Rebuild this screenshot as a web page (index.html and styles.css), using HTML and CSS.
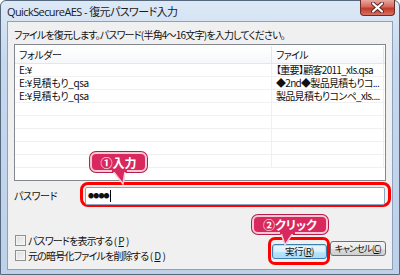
FILE: index.html
```html
<!DOCTYPE html>
<html lang="ja">
<head>
  <meta charset="UTF-8" />
  <title>QuickSecureAES - 復元パスワード入力</title>
  <link rel="stylesheet" href="styles.css">
</head>
<body>
  <div class="window">
    <div class="titlebar">
      <span class="title">QuickSecureAES - 復元パスワード入力</span>
      <div class="close-btn">
        <svg width="13" height="11" viewBox="0 0 13 11">
          <path d="M2 1.5 L11 9.5 M11 1.5 L2 9.5" stroke="#5a2420" stroke-width="4" stroke-linecap="round"/>
          <path d="M2 1.5 L11 9.5 M11 1.5 L2 9.5" stroke="#ffffff" stroke-width="2.2" stroke-linecap="round"/>
        </svg>
      </div>
    </div>

    <div class="client">
      <p class="intro">ファイルを復元します。パスワード(半角4～16文字)を入力してください。</p>

      <div class="list">
        <div class="list-row list-head">
          <span class="col-folder">フォルダー</span>
          <span class="col-file">ファイル</span>
          <span class="col-rest"></span>
        </div>
        <div class="list-row">
          <span class="col-folder">E:¥</span>
          <span class="col-file">【重要】顧客2011_xls.qsa</span>
          <span class="col-rest"></span>
        </div>
        <div class="list-row">
          <span class="col-folder">E:¥見積もり_qsa</span>
          <span class="col-file">◆2nd◆製品見積もりコ...</span>
          <span class="col-rest"></span>
        </div>
        <div class="list-row">
          <span class="col-folder">E:¥見積もり_qsa</span>
          <span class="col-file">製品見積もりコンペ_xls....</span>
          <span class="col-rest"></span>
        </div>
        <div class="list-row"><span class="col-folder"></span><span class="col-file"></span><span class="col-rest"></span></div>
        <div class="list-row"><span class="col-folder"></span><span class="col-file"></span><span class="col-rest"></span></div>
        <div class="list-row"><span class="col-folder"></span><span class="col-file"></span><span class="col-rest"></span></div>
        <div class="list-row"><span class="col-folder"></span><span class="col-file"></span><span class="col-rest"></span></div>
        <div class="list-row"><span class="col-folder"></span><span class="col-file"></span><span class="col-rest"></span></div>
      </div>

      <div class="password-row">
        <label for="password">パスワード</label>
        <div class="highlight highlight-input">
          <div class="textbox" id="password">●●●●<span class="caret"></span></div>
        </div>
      </div>

      <div class="footer">
        <div class="checks">
          <label class="check"><span class="box"></span>パスワードを表示する (<u>P</u>)</label>
          <label class="check"><span class="box"></span>元の暗号化ファイルを削除する (<u>D</u>)</label>
        </div>
        <div class="buttons">
          <div class="highlight highlight-btn">
            <button class="btn btn-default">実行(<u>R</u>)</button>
          </div>
          <button class="btn btn-cancel">キャンセル(<u>C</u>)</button>
        </div>
      </div>

      <div class="callout callout-input">
        ①入力
        <svg class="tail" width="20" height="14" viewBox="0 0 20 14">
          <polygon points="2,0 14,0 12,13" fill="#d8285d" stroke="#f5c9d6" stroke-width="1.5"/>
          <rect x="1" y="-2" width="15" height="3" fill="#d8285d"/>
        </svg>
      </div>
      <div class="callout callout-btn">
        ②クリック
        <svg class="tail" width="20" height="14" viewBox="0 0 20 14">
          <polygon points="4,0 16,0 8,12" fill="#d8285d" stroke="#f5c9d6" stroke-width="1.5"/>
          <rect x="3" y="-2" width="15" height="3" fill="#d8285d"/>
        </svg>
      </div>
    </div>
  </div>
</body>
</html>
```

FILE: styles.css
```css
* {
  box-sizing: border-box;
}

body {
  margin: 0;
  width: 400px;
  height: 275px;
  overflow: hidden;
  font-family: "Noto Sans CJK JP", sans-serif;
  font-size: 10px;
  letter-spacing: -0.4px;
  font-feature-settings: "palt";
  color: #111;
}

.window {
  width: 400px;
  height: 275px;
  display: flex;
  flex-direction: column;
  padding: 0 6px 4px;
  border: 1px solid #56687e;
  border-radius: 6px 6px 0 0;
  background: linear-gradient(to bottom, #dde9f6, #c6d8ee 60px, #bdd1e9);
}

.titlebar {
  position: relative;
  height: 20px;
  display: flex;
  align-items: center;
}

.title {
  font-family: "Open Sans", "Noto Sans CJK JP", sans-serif;
  font-size: 11px;
  letter-spacing: -0.6px;
  color: #1a1a1a;
}

.close-btn {
  position: absolute;
  top: -1px;
  right: -2px;
  width: 35px;
  height: 16px;
  display: flex;
  align-items: center;
  justify-content: center;
  border: 1px solid #6b2b26;
  border-top: none;
  border-radius: 0 0 4px 4px;
  background: linear-gradient(to bottom, #e8a89e, #d4695b 45%, #c2392a 55%, #d8705f);
}

.client {
  position: relative;
  flex: 1;
  padding: 0 6px 4px;
  border: 1px solid #8aa2bd;
  background: #f0f0f0;
}

.intro {
  margin: 6px 0 0;
  height: 14px;
  line-height: 14px;
  white-space: nowrap;
  letter-spacing: -0.8px;
}

.list {
  margin-top: 2px;
  height: 137px;
  border: 1px solid #828790;
  background: #fff;
}

.list-row {
  display: flex;
  height: 13px;
  line-height: 12px;
  border-bottom: 1px solid #f0f0f0;
}

.list-head {
  height: 18px;
  line-height: 17px;
  margin-top: 1px;
  border-bottom: 1px solid #e3e6ea;
  background: linear-gradient(to bottom, #ffffff, #f6f7f9);
}

.list-row span {
  white-space: nowrap;
  padding-left: 4px;
}

.col-folder {
  width: 257px;
  flex-shrink: 0;
  border-right: 1px solid #f0f0f0;
}

.col-file {
  width: 112px;
  flex-shrink: 0;
  border-right: 1px solid #f0f0f0;
  letter-spacing: -0.7px;
}

.list-head .col-folder,
.list-head .col-file {
  border-right-color: #e3e6ea;
}

.col-rest {
  flex: 1;
}

.password-row {
  display: flex;
  align-items: center;
  margin-top: 1px;
  height: 25px;
}

.password-row label {
  width: 66px;
  flex-shrink: 0;
  padding-top: 2px;
}

.highlight {
  flex-shrink: 0;
  border: 3px solid #ff0000;
  border-radius: 8px;
}

.highlight-input {
  width: 311px;
  height: 25px;
  padding: 2px 3px 0 2px;
}

.textbox {
  height: 18px;
  line-height: 16px;
  padding-left: 2px;
  border: 1px solid #8ba4c0;
  border-radius: 2px;
  background: #fff;
  font-size: 6px;
  letter-spacing: -0.8px;
}

.caret {
  display: inline-block;
  width: 1px;
  height: 12px;
  margin-left: 1px;
  vertical-align: -4px;
  background: #000;
}

.footer {
  display: flex;
  align-items: flex-start;
  margin-top: 26px;
}

.checks {
  display: flex;
  flex-direction: column;
  margin-left: 1px;
}

.check {
  display: flex;
  align-items: center;
  height: 15px;
  gap: 2px;
  white-space: nowrap;
  letter-spacing: -0.8px;
}

.box {
  width: 11px;
  height: 11px;
  border: 1px solid #8e8f8f;
  background: linear-gradient(to bottom right, #dcdcdc, #f6f6f6);
  box-shadow: inset 0 0 0 1px #f4f4f4;
}

.buttons {
  display: flex;
  align-items: flex-start;
  margin-left: auto;
}

.highlight-btn {
  width: 62px;
  height: 28px;
  margin-top: 4px;
  padding: 4px 0 0 1px;
  border-radius: 7px;
}

.btn {
  display: flex;
  align-items: center;
  justify-content: center;
  height: 15px;
  padding: 0;
  font-family: "Noto Sans CJK JP", sans-serif;
  font-size: 9.5px;
  font-feature-settings: "palt";
  letter-spacing: -0.5px;
  line-height: 13px;
  white-space: nowrap;
  overflow: visible;
  color: #111;
  border: 1px solid #707070;
  border-radius: 3px;
  background: linear-gradient(to bottom, #f2f2f2, #ebebeb 50%, #dddddd 51%, #cfcfcf);
}

.btn-default {
  width: 55px;
  border-color: #3c7fb1;
  background: linear-gradient(to bottom, #eaf6fd, #d9f0fc 50%, #bee6fd 51%, #a7d9f5);
  box-shadow: inset 0 0 0 1px #b8dcf3;
}

.btn-cancel {
  width: 56px;
  margin-top: 8px;
  font-size: 9px;
  letter-spacing: -0.8px;
}

.callout {
  position: absolute;
  display: flex;
  align-items: center;
  justify-content: center;
  color: #fff;
  font-weight: bold;
  font-size: 12px;
  letter-spacing: 0;
  border: 2px solid #f5c9d6;
  border-radius: 6px;
  background: #d8285d;
  box-shadow: 0 0 0 1px #b71c4a;
}

.callout .tail {
  position: absolute;
  top: 100%;
  overflow: visible;
}

.callout-input {
  left: 82px;
  top: 130px;
  width: 57px;
  height: 20px;
}

.callout-input .tail {
  left: 19px;
  margin-top: 1px;
}

.callout-btn {
  left: 244px;
  top: 193px;
  width: 76px;
  height: 19px;
}

.callout-btn .tail {
  left: 23px;
  margin-top: 1px;
}
```
